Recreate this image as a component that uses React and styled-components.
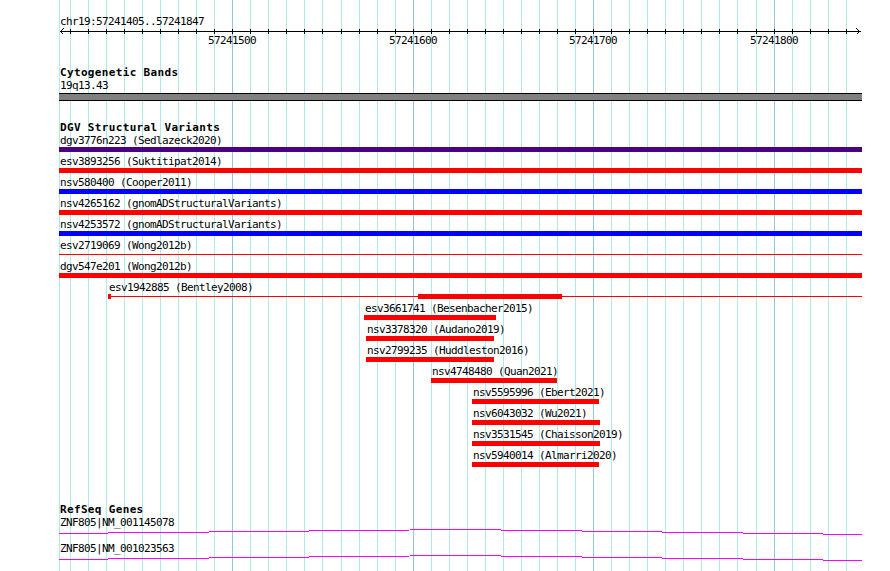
import React from "react";
import styled, { createGlobalStyle } from "styled-components";

// visible region of chr19, in bp, and how many px one bp takes
const VIEW_START = 57241404;
const VIEW_WIDTH = 803;
const SCALE = 1.8045;

const toPx = (bp) => Math.round((bp - VIEW_START) * SCALE);
const clampPx = (bp) => Math.max(0, Math.min(VIEW_WIDTH, toPx(bp)));

const GRID_POSITIONS = [];
for (let bp = 57241410; bp <= 57241840; bp += 10) GRID_POSITIONS.push(bp);

const RED = "#ff0000";
const BLUE = "#0000ff";
const PURPLE = "#4b0082";

const dgvFeatures = [
  { name: "dgv3776n223", study: "Sedlazeck2020", start: 57229874, end: 57262511, color: PURPLE },
  { name: "esv3893256", study: "Suktitipat2014", start: 57236210, end: 57249002, color: RED },
  { name: "nsv580400", study: "Cooper2011", start: 57212356, end: 57277410, color: BLUE },
  { name: "nsv4265162", study: "gnomADStructuralVariants", start: 57238841, end: 57245120, color: RED },
  { name: "nsv4253572", study: "gnomADStructuralVariants", start: 57235112, end: 57251907, color: BLUE },
  { name: "esv2719069", study: "Wong2012b", start: 57218003, end: 57266540, color: RED, thin: true },
  { name: "dgv547e201", study: "Wong2012b", start: 57231470, end: 57259818, color: RED },
  {
    name: "esv1942885",
    study: "Bentley2008",
    start: 57241431,
    end: 57243950,
    color: RED,
    thin: true,
    blocks: [
      [57241431, 57241433],
      [57241603, 57241683],
    ],
  },
  { name: "esv3661741", study: "Besenbacher2015", start: 57241573, end: 57241646, color: RED },
  { name: "nsv3378320", study: "Audano2019", start: 57241574, end: 57241645, color: RED },
  { name: "nsv2799235", study: "Huddleston2016", start: 57241574, end: 57241645, color: RED },
  { name: "nsv4748480", study: "Quan2021", start: 57241610, end: 57241680, color: RED },
  { name: "nsv5595996", study: "Ebert2021", start: 57241633, end: 57241703, color: RED },
  { name: "nsv6043032", study: "Wu2021", start: 57241633, end: 57241704, color: RED },
  { name: "nsv3531545", study: "Chaisson2019", start: 57241633, end: 57241704, color: RED },
  { name: "nsv5940014", study: "Almarri2020", start: 57241633, end: 57241703, color: RED },
];

const refseqGenes = [
  { gene: "ZNF805", transcript: "NM_001145078" },
  { gene: "ZNF805", transcript: "NM_001023563" },
];

const GlobalStyle = createGlobalStyle`
  html, body {
    margin: 0;
    padding: 0;
    background: #fff;
  }
  body {
    font-family: "DejaVu Sans Mono", "Liberation Mono", monospace;
    color: #000;
  }
`;

const Page = styled.div`
  position: relative;
  width: 890px;
  height: 571px;
  overflow: hidden;
  background: #fff;
`;

const GridLayer = styled.div`
  position: absolute;
  top: 0;
  bottom: 0;
  left: 59px;
  width: ${VIEW_WIDTH}px;
`;

const GridLine = styled.div`
  position: absolute;
  top: 0;
  bottom: 0;
  width: 1px;
  background: ${(p) => (p.$major ? "#8dc9e6" : "#aceaee")};
`;

const View = styled.div`
  position: relative;
  z-index: 1;
  margin-left: 59px;
  width: ${VIEW_WIDTH}px;
  display: flex;
  flex-direction: column;
`;

const RulerSection = styled.section`
  padding-top: 16px;
`;

// labels are a 6px-per-char mono face, a bit taller than DejaVu at 10px
const monoText = `
  font-size: 11px;
  letter-spacing: -0.62px;
  line-height: 12px;
  white-space: nowrap;
`;

const LocationLabel = styled.div`
  ${monoText}
  height: 12px;
  padding-left: 1px;
`;

const RulerScale = styled.svg`
  display: block;
`;

const TickLabels = styled.div`
  position: relative;
  height: 12px;
`;

const TickLabel = styled.span`
  ${monoText}
  position: absolute;
  top: 0;
  transform: translateX(-50%);
`;

const Track = styled.section`
  margin-top: ${(p) => p.$gap}px;
  display: flex;
  flex-direction: column;
`;

const TrackTitle = styled.h3`
  margin: 0 0 ${(p) => p.$after || 0}px;
  font-size: 11px;
  font-weight: bold;
  letter-spacing: 0.34px;
  line-height: 12px;
  height: 12px;
  padding-left: 1px;
  white-space: nowrap;
`;

const FeatureLabel = styled.div`
  ${monoText}
  height: 12px;
  padding-left: 1px;
`;

const CytoBand = styled.div`
  margin-top: 1px;
  height: 6px;
  background: #808080;
  border-top: 1px solid #000;
  border-bottom: 1px solid #000;
`;

const FeatureRow = styled.div`
  height: 21px;
`;

const FeatureBox = styled.div`
  display: flex;
  flex-direction: column;
`;

const Glyph = styled.div`
  position: relative;
  height: 5px;
  background: ${(p) =>
    p.$thin
      ? `linear-gradient(${p.$color}, ${p.$color}) 0 2px / 100% 1px no-repeat`
      : p.$color};
`;

const Block = styled.div`
  position: absolute;
  top: 0;
  height: 5px;
  background: ${(p) => p.$color};
`;

const GeneRow = styled.div`
  height: 26px;
`;

const GeneLine = styled.svg`
  display: block;
`;

function Ruler() {
  const majors = GRID_POSITIONS.filter((bp) => bp % 100 === 0);
  return (
    <RulerSection>
      <LocationLabel>chr19:57241405..57241847</LocationLabel>
      <RulerScale width={VIEW_WIDTH} height="7" shapeRendering="crispEdges">
        <rect x="1" y="3" width={VIEW_WIDTH - 2} height="1" fill="#000" />
        {GRID_POSITIONS.map((bp) => (
          <rect key={bp} x={toPx(bp)} y="1" width="1" height="5" fill="#000" />
        ))}
        <polyline points="4.5,0.5 1.5,3.5 4.5,6.5" fill="none" stroke="#000" />
        <polyline
          points={`${VIEW_WIDTH - 5.5},0.5 ${VIEW_WIDTH - 2.5},3.5 ${VIEW_WIDTH - 5.5},6.5`}
          fill="none"
          stroke="#000"
        />
      </RulerScale>
      <TickLabels>
        {majors.map((bp) => (
          <TickLabel key={bp} style={{ left: toPx(bp) }}>
            {bp}
          </TickLabel>
        ))}
      </TickLabels>
    </RulerSection>
  );
}

function Feature({ f }) {
  const left = clampPx(f.start);
  const width = clampPx(f.end) - left;
  return (
    <FeatureRow>
      <FeatureBox style={{ marginLeft: left, width }}>
        <FeatureLabel>
          {f.name} ({f.study})
        </FeatureLabel>
        <Glyph $color={f.color} $thin={f.thin}>
          {f.blocks &&
            f.blocks.map(([s, e]) => (
              <Block
                key={s}
                $color={f.color}
                style={{ left: toPx(s) - left, width: toPx(e) - toPx(s) }}
              />
            ))}
        </Glyph>
      </FeatureBox>
    </FeatureRow>
  );
}

function Gene({ g }) {
  const mid = Math.round(VIEW_WIDTH / 2);
  return (
    <GeneRow>
      <FeatureLabel>
        {g.gene}|{g.transcript}
      </FeatureLabel>
      <GeneLine width={VIEW_WIDTH} height="14" shapeRendering="crispEdges">
        <polyline
          points={`0,4.5 ${mid},0.5 ${VIEW_WIDTH},5.5`}
          fill="none"
          stroke="#ff00ff"
          strokeWidth="1"
        />
      </GeneLine>
    </GeneRow>
  );
}

export default function App() {
  return (
    <>
      <GlobalStyle />
      <Page>
        <GridLayer>
          <GridLine style={{ left: 0 }} />
          {GRID_POSITIONS.map((bp) => (
            <GridLine key={bp} $major={bp % 100 === 0} style={{ left: toPx(bp) }} />
          ))}
        </GridLayer>
        <View>
          <Ruler />

          <Track $gap={20}>
            <TrackTitle $after={1}>Cytogenetic Bands</TrackTitle>
            <FeatureLabel>19q13.43</FeatureLabel>
            <CytoBand />
          </Track>

          <Track $gap={21}>
            <TrackTitle $after={1}>DGV Structural Variants</TrackTitle>
            {dgvFeatures.map((f) => (
              <Feature key={f.name} f={f} />
            ))}
          </Track>

          <Track $gap={33}>
            <TrackTitle $after={1}>RefSeq Genes</TrackTitle>
            {refseqGenes.map((g) => (
              <Gene key={g.transcript} g={g} />
            ))}
          </Track>
        </View>
      </Page>
    </>
  );
}
